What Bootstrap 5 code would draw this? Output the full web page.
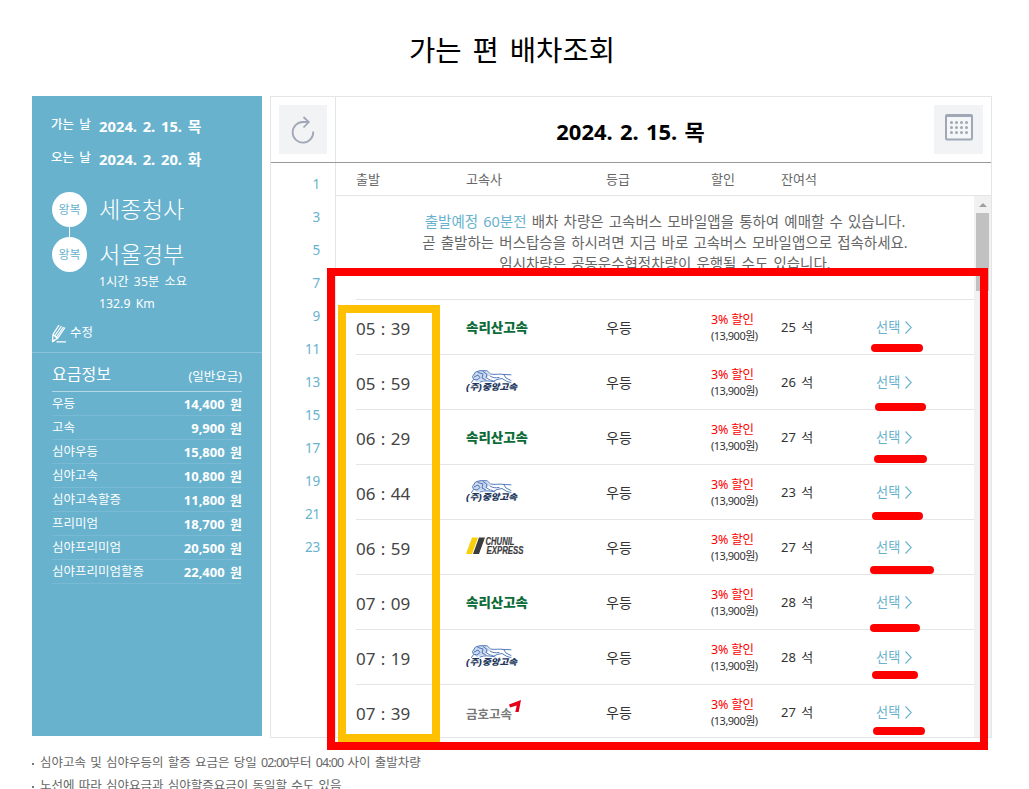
<!DOCTYPE html>
<html lang="ko">
<head>
<meta charset="utf-8">
<meta name="viewport" content="width=device-width, initial-scale=1">
<title>가는 편 배차조회</title>
<link href="https://cdn.jsdelivr.net/npm/bootstrap@5.3.0/dist/css/bootstrap.min.css" rel="stylesheet">
<style>
:root{--sky:#68b2ce;--rule:#e5e5e5}
html,body{height:789px;overflow:hidden}
body{font-family:"Noto Sans","Noto Sans CJK KR",sans-serif;font-size:13px;line-height:20px;color:#666;background:#fff;word-spacing:2px;white-space:nowrap}
.page-title{font-size:28.6px;line-height:40px;font-weight:400;color:#000;word-spacing:3.5px;padding-top:30px;height:96px;margin:0;padding-right:5px}
.board{padding-left:32px;gap:8px;height:642px}
.trip{width:230px;height:640px;background:var(--sky);color:#fff}
.trip-top{height:256px;padding:18px 20px 0 19px}
.trip-date{height:33px;gap:8px}
.trip-date span{font-size:12.5px;word-spacing:2px;width:40px;font-weight:500;padding-top:1px}
.trip-date strong{font-size:14.8px;word-spacing:1.8px;padding-top:2px}
.stops{padding-top:12px}
.stop{height:45px;gap:12px}
.dot{width:35px;height:35px;background:#fff;color:var(--sky);font-size:12px;margin-left:1px}
.stop + .stop .dot::before{content:"";position:absolute;left:17px;top:-10px;width:1px;height:10px;background:#fff}
.stop-name{font-size:23.2px;line-height:34px;font-weight:300}
.trip-info{padding-left:48px;font-size:12.3px;line-height:22px;margin-top:-11px}
.edit{padding:7px 0 0 0;gap:4px;font-size:12.5px}
.edit span{padding-top:1px}
.fares{border-top:1px solid #8cc5da;padding:0 20px}
.fare-head{height:39px;border-bottom:1px solid #b3d8e6;padding-top:4px}
.fare-head b{font-size:16px;font-weight:400}
.fare-head span{font-size:12.5px;padding-top:6px}
.fare{height:24px;border-bottom:1px solid #78bad3;font-size:12.5px}
.fare strong{font-size:13px;word-spacing:2px}
.sched{width:722px;border:1px solid var(--rule)}
.sched-head{height:66px;border-bottom:1px solid #999}
.tool{width:65px;border-right:1px solid var(--rule);padding:8px 0 0 8px}
.sq{width:48px;height:49px;background:#f1f3f5}
.cal .sq{width:49px}
.day{font-size:22px;font-weight:700;color:#000;word-spacing:1.5px;padding:2px 9px 0 0}
.cal{padding:8px 8px 0 0}
.hours{width:65px;border-right:1px solid var(--rule);padding:4px 15px 0 0;color:var(--sky);text-align:right}
.hours div{height:33px;line-height:34px;font-size:13.5px;letter-spacing:-.2px}
.cols{display:grid;grid-template-columns:110px 140px 105px 70px 95px 1fr;align-items:center}
.thead-row{height:33px;border-bottom:1px solid var(--rule);padding:0 0 1px 20px;font-size:13px}
.list{height:541px;overflow:hidden}
.rows{padding-left:20px}
.notice{height:104px;padding-top:15px;font-size:14.5px;line-height:20.8px;text-align:center;border-bottom:1px solid var(--rule);word-spacing:1.4px}
.notice em{font-style:normal;color:var(--sky)}
.bus{height:55px;border-bottom:1px solid var(--rule);color:#333}
.time{font-size:17px;word-spacing:1px;padding-top:3px;color:#444}
.grade{font-size:14px;padding-top:1px}
.sale{font-size:12.5px;line-height:17px;color:red;word-spacing:0;letter-spacing:-.2px}
.sale small{display:block;font-size:11px;line-height:16px;color:#333;letter-spacing:-.5px}
.pick{color:var(--sky);font-size:13.2px;text-decoration:none;gap:5px}
.bus::after{content:"";position:absolute;left:var(--l);top:var(--t);width:var(--w);height:8px;border-radius:4px;background:red;z-index:2}
.m1{--l:515px;--t:44px;--w:52px}.m2{--l:519px;--t:48px;--w:51px}
.m3{--l:518px;--t:45px;--w:53px}.m4{--l:516px;--t:47px;--w:51px}
.m5{--l:514px;--t:46px;--w:64px}.m6{--l:514px;--t:49px;--w:50px}
.m7{--l:516px;--t:41px;--w:46px}.m8{--l:517px;--t:42px;--w:52px}
.bar{width:17px;background:#f1f1f1;padding:7px 2px 0}
.thumb{width:13px;height:78px;background:#c1c1c1;margin-top:6px}
.notes{margin:13px 0 0 32px;padding:0;list-style:none;font-size:12.5px;line-height:23px;word-spacing:1px}
.notes li{display:flex;align-items:center;gap:6px}
.notes i{font-style:normal;letter-spacing:-.9px}
.notes li::before{content:"";width:2px;height:2px;background:#777;margin-top:3px}
.frame-red{position:absolute;left:327px;top:268px;width:661px;height:482px;border:8px solid red}
.frame-gold{position:absolute;left:338px;top:305px;width:102px;height:437px;border:8px solid #ffc000}
</style>
</head>
<body class="position-relative">
<svg width="0" height="0" class="position-absolute">
<defs>
<symbol id="songnisan" viewBox="0 0 64 24"><text x="0" y="16.500" font-size="13" font-weight="900" fill="#0c6b37" textLength="62" lengthAdjust="spacingAndGlyphs">속리산고속</text></symbol>
<symbol id="jungang" viewBox="0 0 64 24">
<path d="M8 4l4-3h8l4 4-6 5-7 2-4-3z" fill="#a9c0e4" opacity=".6"/>
<g fill="none" stroke="#3f6bb2" stroke-width=".9" stroke-linecap="round" stroke-linejoin="round">
<path d="M5.500 12.500L7.500 9.500 6.500 6.500 9.500 2 14 .700H21L24.500 4C29 5 34 3.500 38 4.500L45 4.800M8 7L12 5 14 7.500 11 10 8.500 9.500"/>
<path d="M12 2.500L17 4 16 8 20 10M17 1.500L21 4.500 20 7.500 24 10"/>
<path d="M14 12C19 10 23 11 27 11.500L31 9.500 36 8.500 41 11.500 45 12.500M38 5L40 8 45 10.500M24 6C27 8 29 8 33 7.500M25 10L29 12"/>
</g>
<text x="0" y="20.300" font-size="8.600" font-weight="900" font-style="italic" fill="#21365c" textLength="51" lengthAdjust="spacingAndGlyphs">(주)중앙고속</text></symbol>
<symbol id="chunil" viewBox="0 0 64 24"><path d="M6 2.500h6L6 19H0z" fill="#f7cf0a"/><path d="M13 2.500h6L13 19H7z" fill="#3c3c3e"/>
<g font-family="Liberation Sans Narrow,Liberation Sans,sans-serif" font-size="10.400" font-weight="700" font-style="italic" fill="#3c3c3e" stroke="#3c3c3e" stroke-width=".2"><text x="19.500" y="9.800" textLength="29" lengthAdjust="spacingAndGlyphs">CHUNIL</text><text x="20.500" y="19" textLength="37" lengthAdjust="spacingAndGlyphs">EXPRESS</text></g></symbol>
<symbol id="kumho" viewBox="0 0 64 24"><text x="0" y="18.500" font-size="12" font-weight="700" fill="#777" textLength="46" lengthAdjust="spacingAndGlyphs">금호고속</text><path d="M43 4.500L55 0 52.700 12H49.300L50.700 5.500 44 7.500z" fill="#e50019"/></symbol>
<symbol id="gt" viewBox="0 0 7 13"><path d="M.5.500l5.800 6-5.800 6" fill="none" stroke="#68b2ce" stroke-width="1.100"/></symbol>
</defs></svg>

<h1 class="page-title text-center">가는 편 배차조회</h1>
<main class="board d-flex">
<aside class="trip flex-shrink-0">
  <div class="trip-top">
    <div class="trip-date d-flex"><span>가는 날</span><strong>2024. 2. 15. 목</strong></div>
    <div class="trip-date d-flex"><span>오는 날</span><strong>2024. 2. 20. 화</strong></div>
    <div class="stops">
      <div class="stop d-flex"><div class="dot rounded-circle d-flex align-items-center justify-content-center position-relative">왕복</div><div class="stop-name">세종청사</div></div>
      <div class="stop d-flex"><div class="dot rounded-circle d-flex align-items-center justify-content-center position-relative">왕복</div><div class="stop-name">서울경부</div></div>
    </div>
    <div class="trip-info">1시간 35분 소요<br>132.9 Km</div>
    <div class="edit d-flex align-items-center">
      <svg width="15" height="20" viewBox="0 0 15 20" fill="none" stroke="#fff" stroke-width="1.300"><path d="M1.500 18L2 11.500 8 2M1.500 18L6.500 15.500 14 4.500M4 12.500L10.500 3M5.500 14L12.500 4M2 11.500L6.500 15.500M1 18.800l3-1.500M5.500 18.800H15"/></svg><span>수정</span></div>
  </div>
  <div class="fares">
    <div class="fare-head d-flex justify-content-between align-items-center"><b>요금정보</b><span>(일반요금)</span></div>
    <div class="fare d-flex justify-content-between align-items-center"><span>우등</span><strong>14,400 원</strong></div>
    <div class="fare d-flex justify-content-between align-items-center"><span>고속</span><strong>9,900 원</strong></div>
    <div class="fare d-flex justify-content-between align-items-center"><span>심야우등</span><strong>15,800 원</strong></div>
    <div class="fare d-flex justify-content-between align-items-center"><span>심야고속</span><strong>10,800 원</strong></div>
    <div class="fare d-flex justify-content-between align-items-center"><span>심야고속할증</span><strong>11,800 원</strong></div>
    <div class="fare d-flex justify-content-between align-items-center"><span>프리미엄</span><strong>18,700 원</strong></div>
    <div class="fare d-flex justify-content-between align-items-center"><span>심야프리미엄</span><strong>20,500 원</strong></div>
    <div class="fare d-flex justify-content-between align-items-center"><span>심야프리미엄할증</span><strong>22,400 원</strong></div>
  </div>
</aside>
<section class="sched flex-shrink-0 d-flex flex-column">
  <div class="sched-head d-flex">
    <div class="tool"><div class="sq d-flex align-items-center justify-content-center"><svg width="24" height="28" viewBox="0 0 24 28" fill="none" stroke="#a0a8b6" stroke-width="1.800"><path d="M22.200 15.500A10.300 10.300 0 1 1 12 6h5M12.500 1l5.300 5-5.300 5.500"/></svg></div></div>
    <div class="day flex-grow-1 d-flex align-items-center justify-content-center">2024. 2. 15. 목</div>
    <div class="cal"><div class="sq d-flex align-items-center justify-content-center pb-1"><svg width="28" height="27" viewBox="0 0 28 27"><rect x="1" y="1" width="26" height="24.500" rx="1" fill="#f5f6f8" stroke="#a0a8b6" stroke-width="2"/><path d="M2 2.500h24" stroke="#a0a8b6"/><path d="M6.500 8.500h17M6.500 13.500h17M6.500 18.500h17" stroke="#a0a8b6" stroke-width="3" stroke-linecap="round" stroke-dasharray="0 5"/></svg></div></div>
  </div>
  <div class="d-flex flex-grow-1">
    <nav class="hours"><div>1</div><div>3</div><div>5</div><div>7</div><div>9</div><div>11</div><div>13</div><div>15</div><div>17</div><div>19</div><div>21</div><div>23</div></nav>
    <div class="flex-grow-1">
      <div class="thead-row cols"><span>출발</span><span>고속사</span><span>등급</span><span>할인</span><span>잔여석</span></div>
      <div class="list d-flex">
        <div class="rows flex-grow-1">
          <div class="notice"><em>출발예정 60분전</em> 배차 차량은 고속버스 모바일앱을 통하여 예매할 수 있습니다.<br>곧 출발하는 버스탑승을 하시려면 지금 바로 고속버스 모바일앱으로 접속하세요.<br>임시차량은 공동운수협정차량이 운행될 수도 있습니다.</div>
          <div class="bus cols position-relative m1"><span class="time">05 : 39</span><svg width="64" height="24"><use href="#songnisan"/></svg><span class="grade">우등</span><span class="sale">3% 할인<small>(13,900원)</small></span><span class="seat">25 석</span><a class="pick d-flex align-items-center">선택<svg width="7" height="13"><use href="#gt"/></svg></a></div>
          <div class="bus cols position-relative m2"><span class="time">05 : 59</span><svg width="64" height="24"><use href="#jungang"/></svg><span class="grade">우등</span><span class="sale">3% 할인<small>(13,900원)</small></span><span class="seat">26 석</span><a class="pick d-flex align-items-center">선택<svg width="7" height="13"><use href="#gt"/></svg></a></div>
          <div class="bus cols position-relative m3"><span class="time">06 : 29</span><svg width="64" height="24"><use href="#songnisan"/></svg><span class="grade">우등</span><span class="sale">3% 할인<small>(13,900원)</small></span><span class="seat">27 석</span><a class="pick d-flex align-items-center">선택<svg width="7" height="13"><use href="#gt"/></svg></a></div>
          <div class="bus cols position-relative m4"><span class="time">06 : 44</span><svg width="64" height="24"><use href="#jungang"/></svg><span class="grade">우등</span><span class="sale">3% 할인<small>(13,900원)</small></span><span class="seat">23 석</span><a class="pick d-flex align-items-center">선택<svg width="7" height="13"><use href="#gt"/></svg></a></div>
          <div class="bus cols position-relative m5"><span class="time">06 : 59</span><svg width="64" height="24"><use href="#chunil"/></svg><span class="grade">우등</span><span class="sale">3% 할인<small>(13,900원)</small></span><span class="seat">27 석</span><a class="pick d-flex align-items-center">선택<svg width="7" height="13"><use href="#gt"/></svg></a></div>
          <div class="bus cols position-relative m6"><span class="time">07 : 09</span><svg width="64" height="24"><use href="#songnisan"/></svg><span class="grade">우등</span><span class="sale">3% 할인<small>(13,900원)</small></span><span class="seat">28 석</span><a class="pick d-flex align-items-center">선택<svg width="7" height="13"><use href="#gt"/></svg></a></div>
          <div class="bus cols position-relative m7"><span class="time">07 : 19</span><svg width="64" height="24"><use href="#jungang"/></svg><span class="grade">우등</span><span class="sale">3% 할인<small>(13,900원)</small></span><span class="seat">28 석</span><a class="pick d-flex align-items-center">선택<svg width="7" height="13"><use href="#gt"/></svg></a></div>
          <div class="bus cols position-relative m8"><span class="time">07 : 39</span><svg width="64" height="24"><use href="#kumho"/></svg><span class="grade">우등</span><span class="sale">3% 할인<small>(13,900원)</small></span><span class="seat">27 석</span><a class="pick d-flex align-items-center">선택<svg width="7" height="13"><use href="#gt"/></svg></a></div>
        </div>
        <div class="bar flex-shrink-0"><svg class="d-block mx-auto" width="8" height="4"><path d="M0 4l4-4 4 4z" fill="#a0a0a0"/></svg><div class="thumb"></div></div>
      </div>
    </div>
  </div>
</section>
</main>
<ul class="notes"><li><span>심야고속 및 심야우등의 할증 요금은 당일 <i>02:00</i>부터 <i>04:00</i> 사이 출발차량</span></li><li><span>노선에 따라 심야요금과 심야할증요금이 동일할 수도 있음</span></li></ul>
<div class="frame-red"></div><div class="frame-gold"></div>
</body>
</html>
